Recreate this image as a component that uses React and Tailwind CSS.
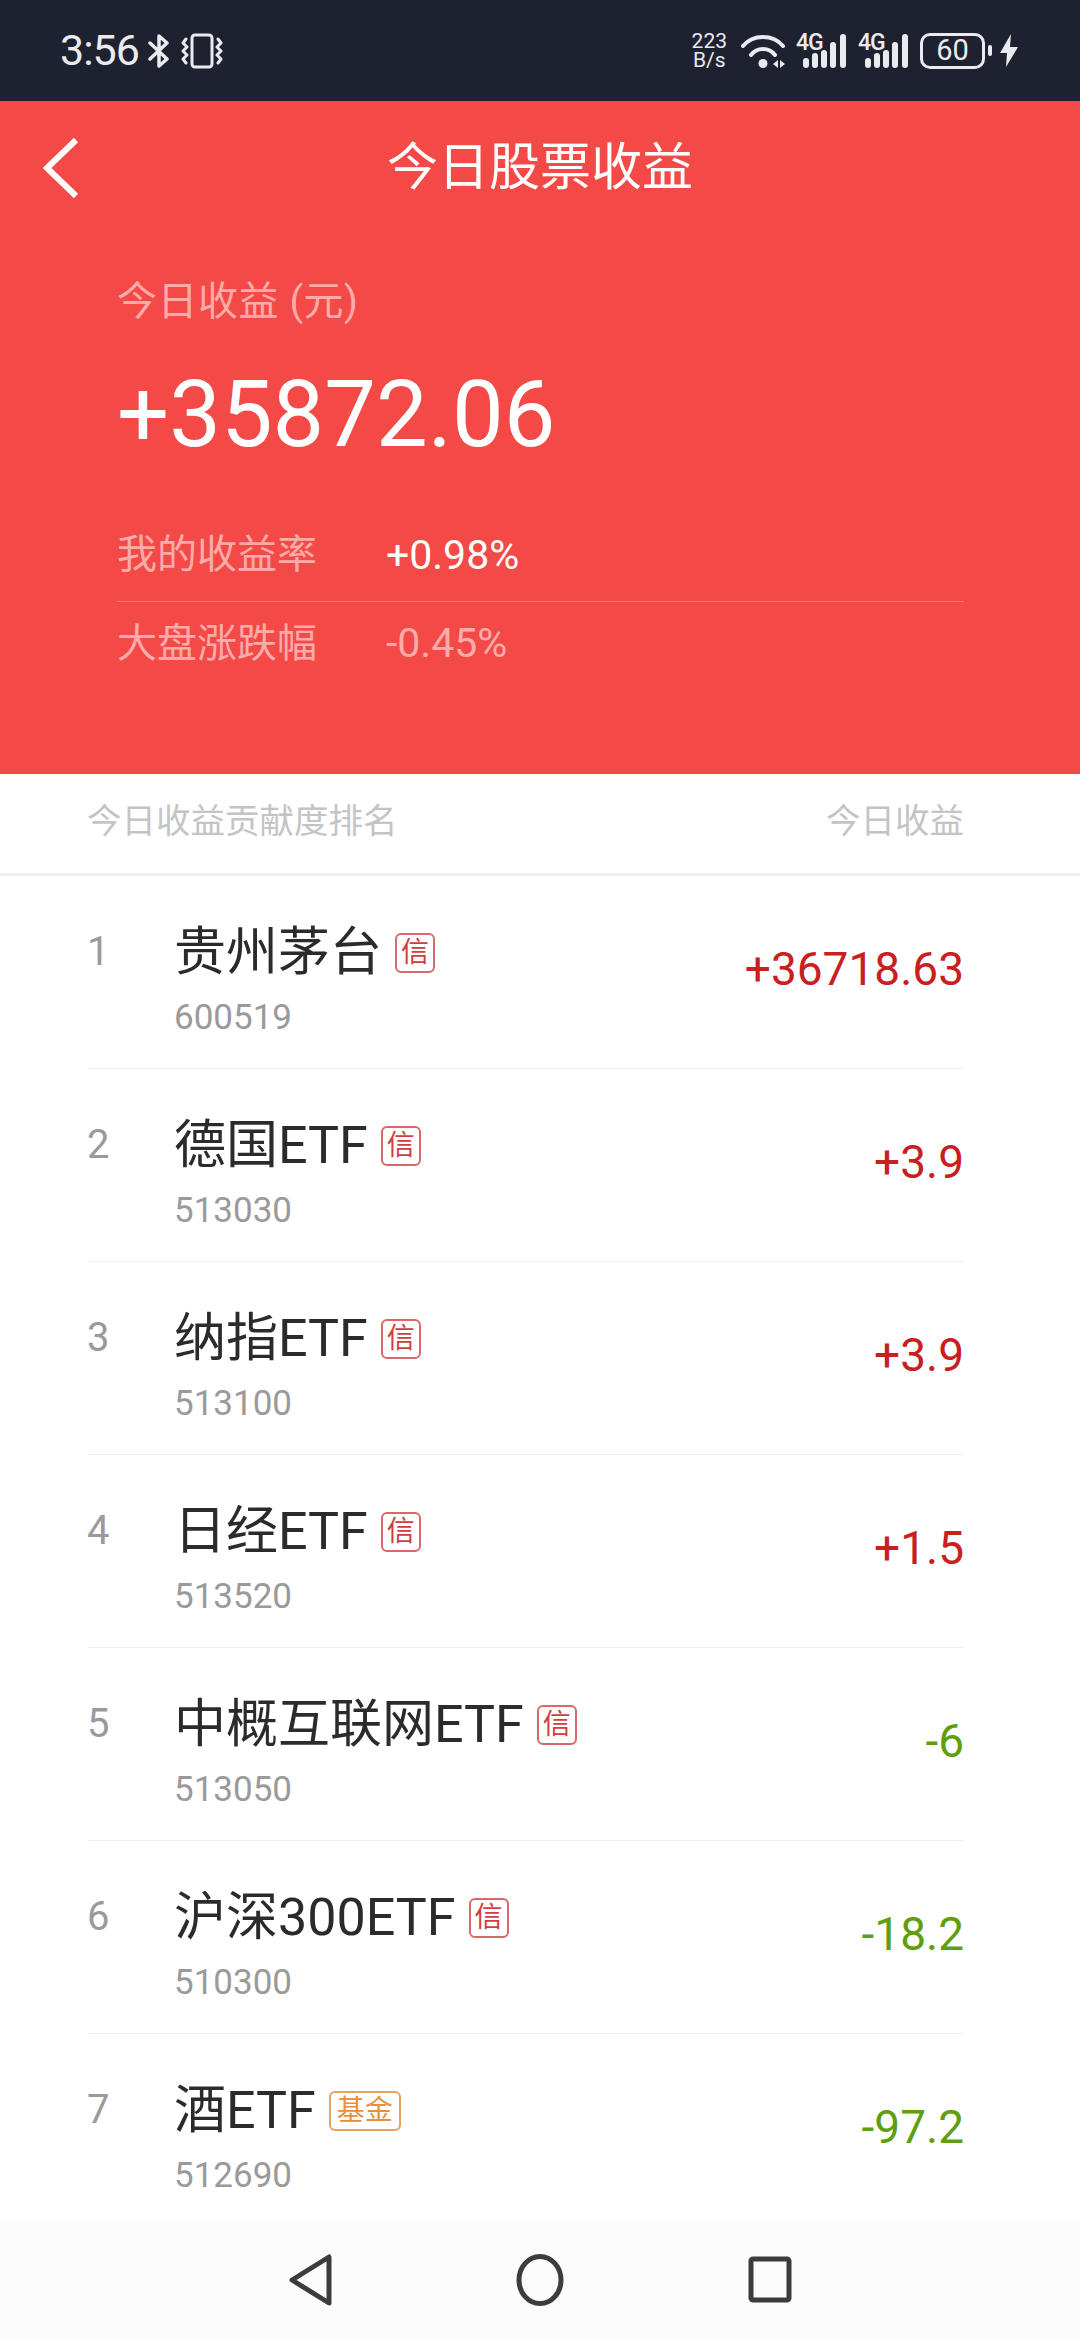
import React from "react";

const rows = [
  { name: "贵州茅台", code: "600519", value: "+36718.63", tag: "信" },
  { name: "德国ETF", code: "513030", value: "+3.9", tag: "信" },
  { name: "纳指ETF", code: "513100", value: "+3.9", tag: "信" },
  { name: "日经ETF", code: "513520", value: "+1.5", tag: "信" },
  { name: "中概互联网ETF", code: "513050", value: "-6", tag: "信" },
  { name: "沪深300ETF", code: "510300", value: "-18.2", tag: "信" },
  { name: "酒ETF", code: "512690", value: "-97.2", tag: "基金" },
];

function Signal() {
  return (
    <div className="relative w-[50px] h-[34px]">
      <span className="absolute left-0 top-[-3px] text-[23px] leading-[23px] font-medium tracking-[-1px] text-[#e9ebef]">4G</span>
      <svg width="50" height="34" viewBox="0 0 50 34" fill="#e9ebef" className="absolute left-0 top-0">
        <rect x="7" y="24" width="6" height="10" rx="3" />
        <rect x="16" y="19" width="6" height="15" rx="3" />
        <rect x="25" y="16" width="6" height="18" rx="3" />
        <rect x="34" y="8" width="6" height="26" rx="3" />
        <rect x="44" y="0" width="6" height="34" rx="3" />
      </svg>
    </div>
  );
}

function StatusBar() {
  return (
    <div className="h-[101px] shrink-0 bg-[#1e2230] flex items-center justify-between pl-[60px] pr-[62px] text-[#e9ebef]">
      <div className="flex items-center">
        <span className="text-[43px] leading-none tracking-[-1px]">3:56</span>
        <svg width="22" height="36" viewBox="0 0 22 36" fill="none" stroke="#e9ebef" strokeWidth="3.5" strokeLinejoin="round" strokeLinecap="round" className="ml-[9px]">
          <path d="M2 10 L19 26 L11 33 V3 L19 10 L2 26" />
        </svg>
        <svg width="42" height="36" viewBox="0 0 42 36" fill="none" stroke="#e9ebef" strokeWidth="3" strokeLinecap="round" strokeLinejoin="round" className="ml-[11px]">
          <rect x="11" y="2" width="20" height="32" rx="3" />
          <path d="M5 6 L2 10 L6 14 L2 18 L6 22 L2 26 L5 30" />
          <path d="M37 6 L40 10 L36 14 L40 18 L36 22 L40 26 L37 30" />
        </svg>
      </div>
      <div className="flex items-center">
        <div className="flex flex-col items-center text-[21px] leading-[19px]">
          <span>223</span>
          <span>B/s</span>
        </div>
        <svg width="44" height="34" viewBox="0 0 44 34" fill="none" stroke="#e9ebef" strokeWidth="4" strokeLinecap="round" className="ml-[14px]">
          <path d="M2 12 C12 0 32 0 42 12" />
          <path d="M10 21 C16 13 28 13 34 21" />
          <circle cx="22" cy="29.5" r="4.5" fill="#e9ebef" stroke="none" />
          <path d="M37 26 L32 30 L37 34 Z" fill="#e9ebef" stroke="none" />
          <path d="M39 26 L44 30 L39 34 Z" fill="#e9ebef" stroke="none" />
        </svg>
        <div className="ml-[11px]"><Signal /></div>
        <div className="ml-[12px]"><Signal /></div>
        <div className="ml-[12px] w-[65px] h-[36px] border-[3px] border-[#e9ebef] rounded-[10px] flex items-center justify-center text-[29px] leading-none">60</div>
        <div className="ml-[3px] w-[4px] h-[11px] bg-[#e9ebef] rounded-[2px]" />
        <svg width="18" height="33" viewBox="0 0 18 33" fill="#e9ebef" className="ml-[8px]">
          <path d="M11 0 L0 19 H7 L6 33 L18 13 H10 Z" />
        </svg>
      </div>
    </div>
  );
}

function Summary() {
  return (
    <div className="h-[673px] shrink-0 bg-[#f44a47]">
      <div className="relative h-[132px] flex items-center justify-center">
        <svg width="40" height="62" viewBox="0 0 40 62" fill="none" stroke="#ffffff" strokeWidth="6" className="absolute left-[41px] top-[36px]">
          <path d="M35 3 L6 31 L35 59" />
        </svg>
        <h1 className="text-[51px] leading-none text-white font-normal">今日股票收益</h1>
      </div>
      <div className="pl-[117px] pr-[116px]">
        <p className="text-[40px] leading-none tracking-[0.5px] text-[#fdabaa] mt-[49px]">今日收益 (元)</p>
        <p className="text-[92px] leading-none text-white mt-[47px]">+35872.06</p>
        <div className="mt-[74px] h-[67px] flex items-start border-b border-[#fb7573]">
          <span className="w-[269px] text-[40px] leading-none text-[#fdabaa]">我的收益率</span>
          <span className="text-[41px] leading-none text-white">+0.98%</span>
        </div>
        <div className="mt-[21px] flex items-center">
          <span className="w-[269px] text-[40px] leading-none text-[#fdabaa]">大盘涨跌幅</span>
          <span className="text-[41px] leading-none text-[#fdabaa]">-0.45%</span>
        </div>
      </div>
    </div>
  );
}

function Row({ index, row }) {
  const up = row.value.startsWith("+");
  const fund = row.tag === "基金";
  return (
    <div className="h-[193px] flex justify-between border-b border-[#f0f0f0]">
      <div className="flex">
        <span className="w-[87px] pt-[56px] text-[40px] leading-none text-[#9a9a9a]">{index}</span>
        <div>
          <div className="flex items-center mt-[47px]">
            <span className="text-[52px] leading-[60px] text-[#2b2b2b]">{row.name}</span>
            <span
              className={
                fund
                  ? "ml-[13px] h-[40px] px-[6px] flex items-center justify-center border-2 border-[#eaa15c] rounded-[6px] text-[28px] leading-none text-[#e88f3c]"
                  : "ml-[13px] h-[40px] w-[40px] flex items-center justify-center border-2 border-[#d9686a] rounded-[6px] text-[28px] leading-none text-[#cf3d3f]"
              }
            >
              {row.tag}
            </span>
          </div>
          <p className="mt-[17px] text-[35px] leading-none text-[#9a9a9a]">{row.code}</p>
        </div>
      </div>
      <span className={`mt-[70px] text-[46px] leading-none ${up ? "text-[#c8201f]" : "text-[#5f9e0f]"}`}>{row.value}</span>
    </div>
  );
}

function NavBar() {
  return (
    <div className="h-[120px] shrink-0 bg-[#fcfcfc] flex items-start justify-center gap-[183px] pt-[34px]">
      <svg width="44" height="52" viewBox="0 0 44 52" fill="none" stroke="#3c3c3c" strokeWidth="5" strokeLinejoin="round">
        <path d="M4 26 L41 3 V49 Z" />
      </svg>
      <svg width="50" height="52" viewBox="0 0 50 52" fill="none" stroke="#3c3c3c" strokeWidth="5">
        <ellipse cx="25" cy="26" rx="21" ry="23.5" />
      </svg>
      <svg width="44" height="52" viewBox="0 0 44 52" fill="none" stroke="#3c3c3c" strokeWidth="5" strokeLinejoin="round">
        <rect x="3" y="5" width="38" height="41" rx="2" />
      </svg>
    </div>
  );
}

export default function App() {
  return (
    <div className="w-[1080px] h-[2340px] flex flex-col overflow-hidden bg-white font-[Roboto,'Noto_Sans_CJK_SC',sans-serif]">
      <StatusBar />
      <Summary />
      <div className="flex-1 min-h-0 overflow-hidden bg-white">
        <div className="h-[102px] pl-[87px] pr-[116px] pb-[5px] flex items-center justify-between border-b-[3px] border-[#eeeeee] text-[34.5px] leading-none text-[#c4c4c4]">
          <span>今日收益贡献度排名</span>
          <span>今日收益</span>
        </div>
        <div className="ml-[87px] mr-[116px]">
          {rows.map((row, i) => (
            <Row key={row.code} index={i + 1} row={row} />
          ))}
        </div>
      </div>
      <NavBar />
    </div>
  );
}
